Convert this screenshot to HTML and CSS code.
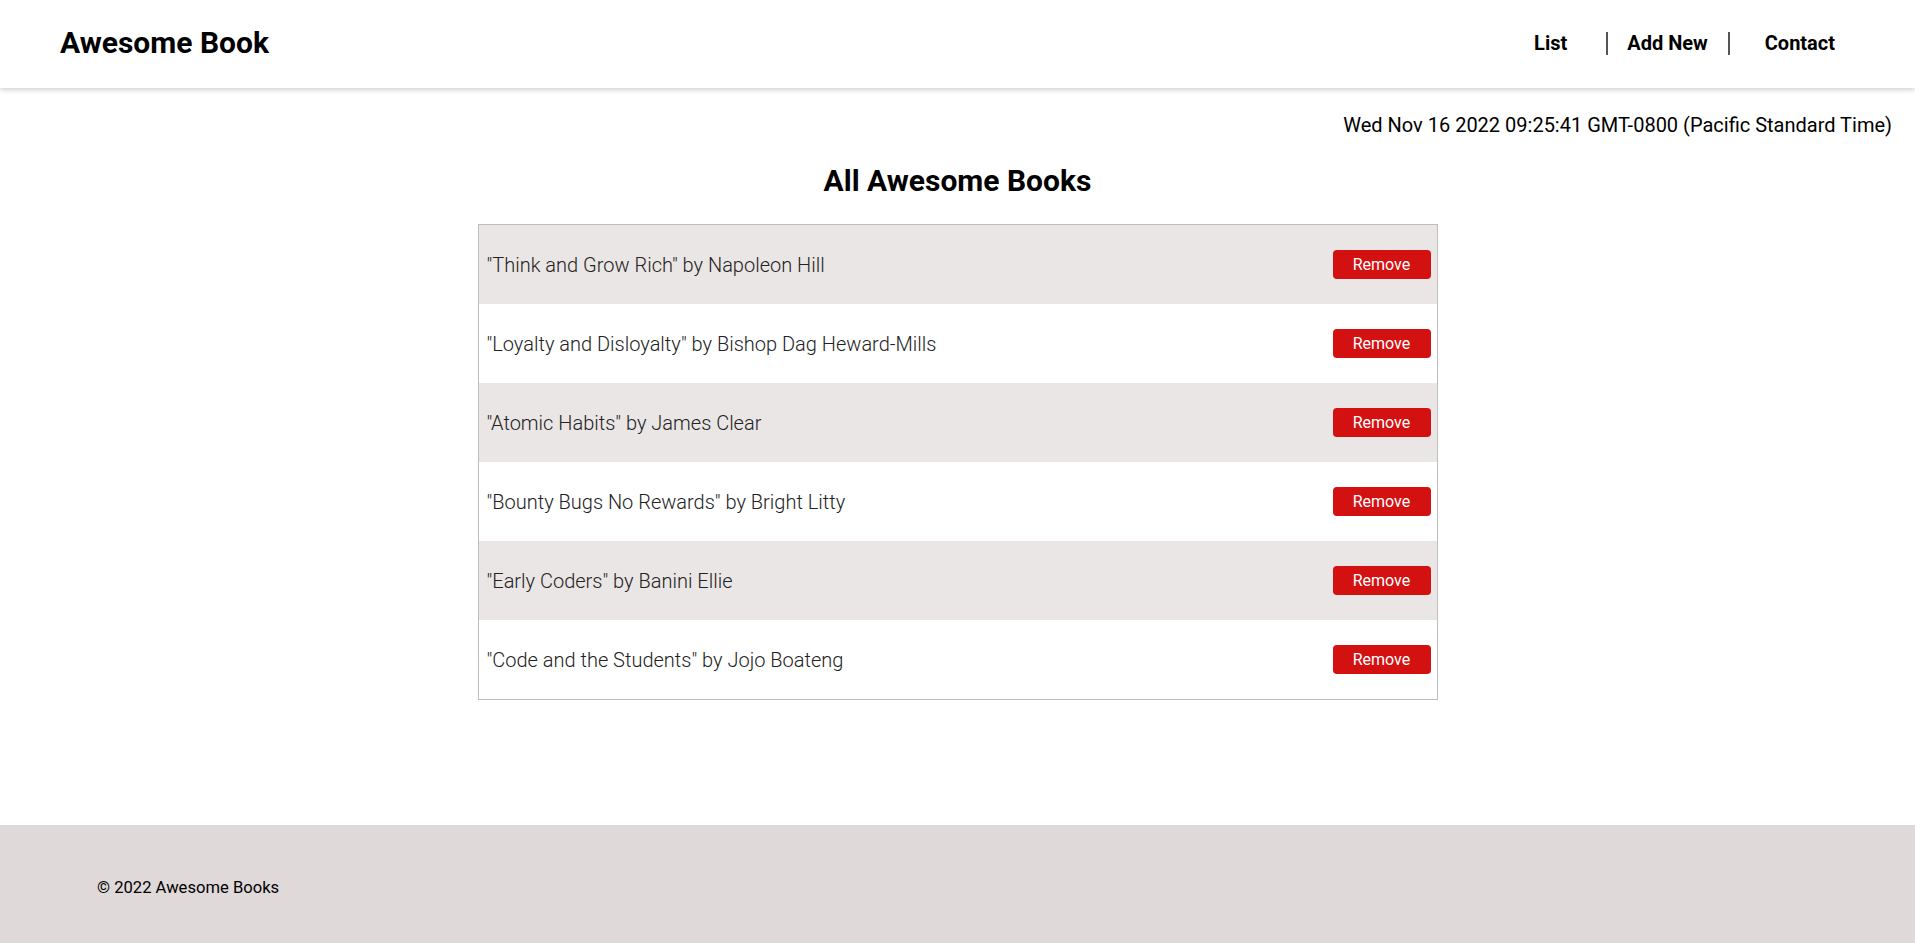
FILE: index.html
```html
<!DOCTYPE html>
<html lang="en">
<head>
<meta charset="UTF-8">
<title>Awesome Books</title>
<link rel="stylesheet" href="styles.css">
</head>
<body>
<header class="site-header">
  <h1 class="logo">Awesome Book</h1>
  <nav class="nav">
    <ul class="nav-list">
      <li class="nav-item nav-first"><a href="#">List</a></li>
      <li class="nav-item nav-mid"><a href="#">Add New</a></li>
      <li class="nav-item nav-last"><a href="#">Contact</a></li>
    </ul>
  </nav>
</header>
<main class="content">
  <p class="date">Wed Nov 16 2022 09:25:41 GMT-0800 (Pacific Standard Time)</p>
  <h2 class="title">All Awesome Books</h2>
  <ul class="books">
    <li class="book"><span class="book-text">"Think and Grow Rich" by Napoleon Hill</span><button class="remove">Remove</button></li>
    <li class="book"><span class="book-text">"Loyalty and Disloyalty" by Bishop Dag Heward-Mills</span><button class="remove">Remove</button></li>
    <li class="book"><span class="book-text">"Atomic Habits" by James Clear</span><button class="remove">Remove</button></li>
    <li class="book"><span class="book-text">"Bounty Bugs No Rewards" by Bright Litty</span><button class="remove">Remove</button></li>
    <li class="book"><span class="book-text">"Early Coders" by Banini Ellie</span><button class="remove">Remove</button></li>
    <li class="book"><span class="book-text">"Code and the Students" by Jojo Boateng</span><button class="remove">Remove</button></li>
  </ul>
</main>
<footer class="site-footer">
  <p class="copy">© 2022 Awesome Books</p>
</footer>
</body>
</html>
```
FILE: styles.css
```css
* { box-sizing: border-box; }
html, body { margin: 0; padding: 0; }
body {
  font-family: Roboto, "Noto Sans", "Liberation Sans", sans-serif;
  color: #000;
  background: #fff;
  overflow: hidden;
}
.site-header {
  height: 88px;
  display: flex;
  align-items: center;
  justify-content: space-between;
  padding: 0 41px 0 60px;
  box-shadow: 0 2px 5px rgba(0, 0, 0, 0.18);
  position: relative;
}
.logo {
  margin: 0 0 3px;
  font-size: 30px;
  font-weight: 700;
}
.nav-list {
  list-style: none;
  display: flex;
  margin: 0 0 2px;
  padding: 0;
}
.nav-item {
  font-size: 20px;
  font-weight: 700;
  line-height: 23px;
}
.nav-item a { color: #000; text-decoration: none; }
.nav-first { padding: 0 39px; }
.nav-mid {
  padding: 0 20px 0 19px;
  border-left: 2px solid #555;
  border-right: 2px solid #555;
}
.nav-last { padding: 0 39px 0 35px; }
.content {
  display: flex;
  flex-direction: column;
  align-items: center;
}
.date {
  align-self: stretch;
  text-align: right;
  margin: 26px 23px 0 0;
  font-size: 20px;
  line-height: 23px;
}
.title {
  margin: 26px 0 0;
  font-size: 30px;
  font-weight: 700;
  line-height: 35px;
}
.books {
  list-style: none;
  margin: 26px 0 0;
  padding: 0;
  width: 960px;
  border: 1px solid #bdbdbd;
}
.book {
  height: 79px;
  display: flex;
  align-items: center;
  justify-content: space-between;
  padding: 0 6px 0 8px;
  background: #fff;
}
.book:nth-child(odd) { background: #eae6e5; }
.book-text {
  font-size: 20px;
  font-weight: 300;
  color: #222;
}
.remove {
  font-family: inherit;
  font-size: 16px;
  line-height: 19px;
  padding: 5px 20px;
  border: none;
  border-radius: 4px;
  background: #d41111;
  color: #fff;
  width: 98px;
}
.site-footer {
  margin-top: 125px;
  height: 119px;
  background: #dfd9d9;
  padding: 53px 0 0 97px;
}
.copy {
  margin: 0;
  font-size: 16.6px;
  line-height: 20px;
}
```
